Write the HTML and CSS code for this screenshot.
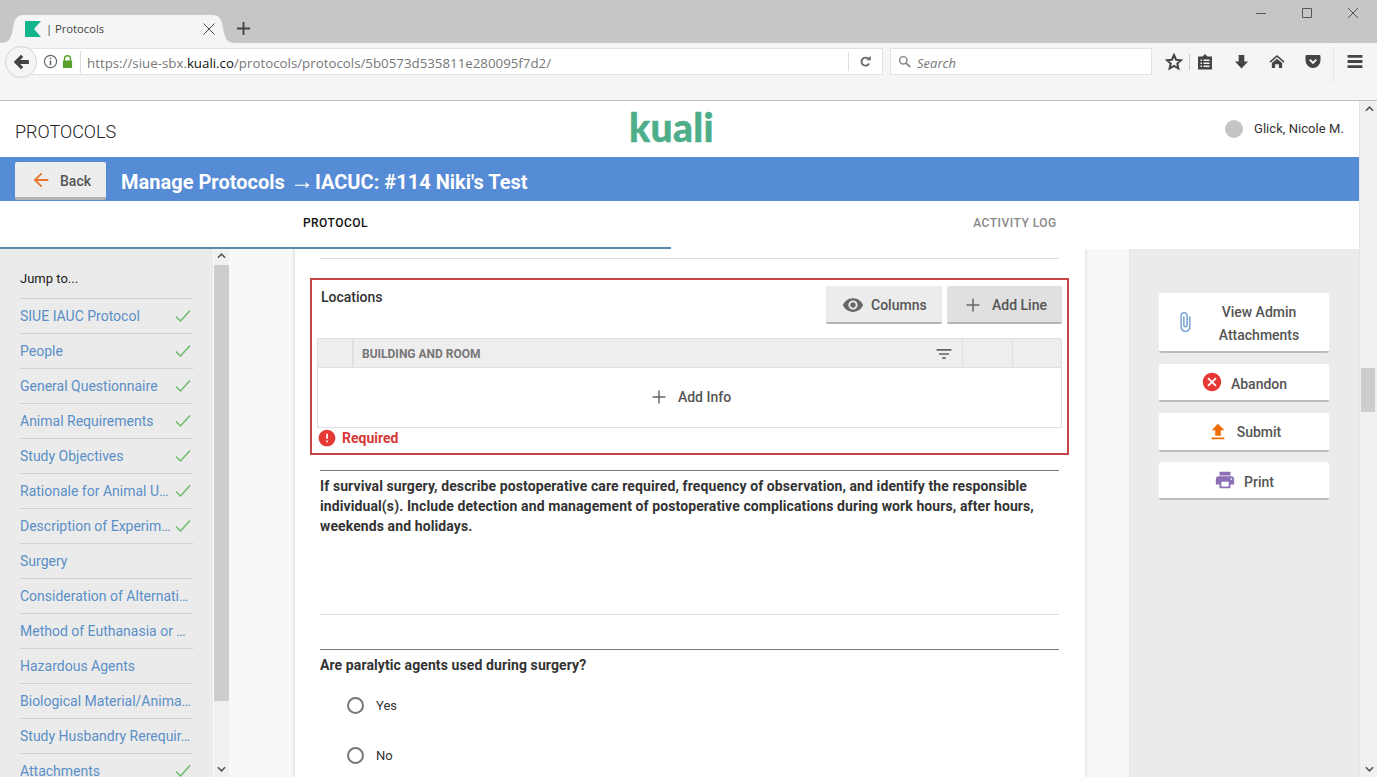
FILE: index.html
```html
<!DOCTYPE html>
<html lang="en">
<head>
<meta charset="utf-8">
<title>Protocols</title>
<link rel="stylesheet" href="styles.css">
</head>
<body>
<div class="chrome">
  <div class="tabstrip">
    <div class="tab">
      <svg class="favicon" viewBox="0 0 16 16"><path fill="#12b58c" d="M0 0h16L9 8l7 8H0z"/></svg>
      <span class="tab-title">| Protocols</span>
      <svg class="tab-close" viewBox="0 0 12 12"><path d="M.5.5l11 11M11.5.5l-11 11" fill="none" stroke="#444" stroke-width="1"/></svg>
    </div>
    <svg class="newtab" viewBox="0 0 14 14"><path d="M6 0h2v6h6v2H8v6H6V8H0V6h6z" fill="#444"/></svg>
    <div class="winctrls">
      <svg viewBox="0 0 12 12"><path d="M1 6.500h10" stroke="#555" fill="none"/></svg>
      <svg viewBox="0 0 12 12"><path d="M1.500 1.500h9v9h-9z" stroke="#555" fill="none"/></svg>
      <svg viewBox="0 0 12 12"><path d="M1 1l10 10M11 1L1 11" stroke="#555" fill="none"/></svg>
    </div>
  </div>
  <div class="toolbar">
    <div class="backcircle"><svg viewBox="0 0 16 16"><path fill="#444" d="M8 1.500l2 2L7.200 6.200H15v3.600H7.200L10 12.500l-2 2L1.500 8z"/></svg></div>
    <div class="urlbar">
      <svg class="ub-info" viewBox="0 0 16 16"><circle cx="8" cy="8" r="6.500" fill="none" stroke="#666" stroke-width="1.300"/><path d="M7.200 7h1.600v5H7.200zM7.200 4h1.600v1.600H7.200z" fill="#666"/></svg>
      <svg class="ub-lock" viewBox="0 0 12 14"><path fill="#5aa02c" d="M1 6h1V4a4 4 0 018 0v2h1v8H1zm2.500 0h5V4a2.500 2.500 0 00-5 0z"/></svg>
      <span class="url">https://siue-sbx.<b>kuali.co</b>/protocols/protocols/5b0573d535811e280095f7d2/</span>
      <span class="ub-reload"><svg viewBox="0 0 16 16"><path fill="none" stroke="#666" stroke-width="2.200" d="M12.500 10.500A5 5 0 1 1 11.500 4.500"/><path fill="#666" d="M9 6.500h5.500V1z"/></svg></span>
    </div>
    <div class="searchbar">
      <svg viewBox="0 0 16 16"><circle cx="6.500" cy="6.500" r="4.500" fill="none" stroke="#888" stroke-width="1.800"/><path d="M10 10l5 5" stroke="#888" stroke-width="2.200"/></svg>
      <span>Search</span>
    </div>
    <div class="tools">
      <svg class="t-star" viewBox="0 0 18 18"><path fill="none" stroke="#444" stroke-width="2" d="M9 2l2.100 4.700 5 .5-3.800 3.300 1.100 5L9 13l-4.400 2.500 1.100-5L1.900 7.200l5-.5z"/></svg>
      <i class="t-sep"></i>
      <svg class="t-clip" viewBox="0 0 16 16"><path fill="#444" d="M5.500 2.500L8 0l2.500 2.500H15v13H1v-13zM3.500 5.500v1.500h1.500V5.500zm3 0v1.500h6V5.500zM3.500 8.500V10h1.500V8.500zm3 0V10h6V8.500zm-3 3V13h1.500v-1.500zm3 0V13h6v-1.500z" fill-rule="evenodd"/></svg>
      <svg class="t-down" viewBox="0 0 16 16"><path fill="#444" d="M5 1h6v7h4l-7 7.500L1 8h4z"/></svg>
      <svg class="t-home" viewBox="0 0 16 16"><path fill="#444" d="M8 1l8 7-1 1.200L8 3.300 1 9.200 0 8zM8 5l5.500 4.600V15H10v-4H6v4H2.500V9.600z"/></svg>
      <svg class="t-pocket" viewBox="0 0 16 16"><path fill="#444" d="M1.500 1h13A1.500 1.500 0 0116 2.500V7A8 8 0 010 7V2.500A1.500 1.500 0 011.500 1z"/><path fill="none" stroke="#f5f5f5" stroke-width="2.200" d="M4.500 6L8 9.500 11.500 6"/></svg>
      <i class="t-sep2"></i>
      <svg class="t-menu" viewBox="0 0 16 14"><path fill="#444" d="M0 0h16v3H0zM0 5.500h16v3H0zM0 11h16v3H0z"/></svg>
    </div>
  </div>
</div>

<div class="viewport">
  <div class="page">
    <header class="apphead">
      <div class="brand">PROTOCOLS</div>
      <div class="logo">kuali</div>
      <div class="user"><span class="avatar"></span><span>Glick, Nicole M.</span></div>
    </header>
    <div class="banner">
      <button class="backbtn"><svg viewBox="0 0 24 24"><path fill="#e8762c" d="M20 11H7.830l5.590-5.590L12 4l-8 8 8 8 1.410-1.410L7.830 13H20v-2z"/></svg>Back</button>
      <h1>Manage Protocols <span class="arw">→</span> IACUC: #114 Niki's Test</h1>
    </div>
    <nav class="tabs">
      <div class="tabitem active">PROTOCOL</div>
      <div class="tabitem">ACTIVITY LOG</div>
    </nav>
    <div class="body">
      <aside class="sidebar">
        <div class="jump">Jump to...</div>
        <div class="navitem"><span>SIUE IAUC Protocol</span><svg viewBox="0 0 16 14"><path d="M1 7.500L5.500 12 15 1.500"/></svg></div>
        <div class="navitem"><span>People</span><svg viewBox="0 0 16 14"><path d="M1 7.500L5.500 12 15 1.500"/></svg></div>
        <div class="navitem"><span>General Questionnaire</span><svg viewBox="0 0 16 14"><path d="M1 7.500L5.500 12 15 1.500"/></svg></div>
        <div class="navitem"><span>Animal Requirements</span><svg viewBox="0 0 16 14"><path d="M1 7.500L5.500 12 15 1.500"/></svg></div>
        <div class="navitem"><span>Study Objectives</span><svg viewBox="0 0 16 14"><path d="M1 7.500L5.500 12 15 1.500"/></svg></div>
        <div class="navitem"><span>Rationale for Animal U…</span><svg viewBox="0 0 16 14"><path d="M1 7.500L5.500 12 15 1.500"/></svg></div>
        <div class="navitem"><span>Description of Experim…</span><svg viewBox="0 0 16 14"><path d="M1 7.500L5.500 12 15 1.500"/></svg></div>
        <div class="navitem"><span>Surgery</span></div>
        <div class="navitem"><span>Consideration of Alternati…</span></div>
        <div class="navitem"><span>Method of Euthanasia or …</span></div>
        <div class="navitem"><span>Hazardous Agents</span></div>
        <div class="navitem"><span>Biological Material/Anima…</span></div>
        <div class="navitem"><span>Study Husbandry Rerequir…</span></div>
        <div class="navitem"><span>Attachments</span><svg viewBox="0 0 16 14"><path d="M1 7.500L5.500 12 15 1.500"/></svg></div>
      </aside>
      <div class="sb sb-side">
        <svg class="arrow" viewBox="0 0 10 6"><path d="M1 5l4-4 4 4"/></svg>
        <div class="sb-track"><div class="sb-thumb"></div></div>
        <svg class="arrow" viewBox="0 0 10 6"><path d="M1 1l4 4 4-4"/></svg>
      </div>
      <main class="main">
        <div class="card">
          <hr class="rule light first">
          <section class="locations">
            <div class="loc-head">
              <div class="loc-title">Locations</div>
              <div class="loc-actions">
                <button class="gbtn btn-col"><svg viewBox="0 0 24 24"><path fill="#666" d="M12 4.500C7 4.500 2.730 7.610 1 12c1.730 4.390 6 7.500 11 7.500s9.270-3.110 11-7.500c-1.730-4.390-6-7.500-11-7.500zM12 17c-2.760 0-5-2.240-5-5s2.240-5 5-5 5 2.240 5 5-2.240 5-5 5zm0-8c-1.660 0-3 1.340-3 3s1.340 3 3 3 3-1.340 3-3-1.340-3-3-3z"/></svg>Columns</button>
                <button class="gbtn btn-add"><svg viewBox="0 0 24 24"><path fill="#666" d="M19 12.800h-6.200V19h-1.600v-6.200H5v-1.600h6.200V5h1.600v6.200H19z"/></svg>Add Line</button>
              </div>
            </div>
            <div class="table">
              <div class="thead">
                <div class="th"></div>
                <div class="th th-main"><span>BUILDING AND ROOM</span><svg viewBox="0 0 24 24"><path fill="#666" d="M10 18h4v-2h-4v2zM3 6v2h18V6H3zm3 7h12v-2H6v2z"/></svg></div>
                <div class="th"></div>
                <div class="th"></div>
              </div>
              <div class="tbody"><svg viewBox="0 0 24 24"><path fill="#666" d="M19 12.800h-6.200V19h-1.600v-6.200H5v-1.600h6.200V5h1.600v6.200H19z"/></svg>Add Info</div>
            </div>
            <div class="required"><svg viewBox="0 0 24 24"><path fill="#e53935" d="M12 2C6.480 2 2 6.480 2 12s4.480 10 10 10 10-4.480 10-10S17.520 2 12 2zm1 15h-2v-2h2v2zm0-4h-2V7h2v6z"/></svg>Required</div>
          </section>
          <hr class="rule dark r2">
          <p class="question q1">If survival surgery, describe postoperative care required, frequency of observation, and identify the responsible individual(s). Include detection and management of postoperative complications during work hours, after hours, weekends and holidays.</p>
          <hr class="rule light r3">
          <hr class="rule dark r4">
          <p class="question q2">Are paralytic agents used during surgery?</p>
          <label class="radio r-yes"><span class="dot"></span>Yes</label>
          <label class="radio r-no"><span class="dot"></span>No</label>
        </div>
      </main>
      <aside class="rail">
        <button class="rbtn rb-view"><svg class="ic-clip" viewBox="0 0 24 24"><path fill="#6a9bd0" d="M16.500 6v11.500c0 2.210-1.790 4-4 4s-4-1.790-4-4V5c0-1.380 1.120-2.500 2.500-2.500s2.500 1.120 2.500 2.500v10.500c0 .55-.45 1-1 1s-1-.45-1-1V6H10v9.500c0 1.380 1.120 2.500 2.500 2.500s2.500-1.120 2.500-2.500V5c0-2.210-1.790-4-4-4S7 2.790 7 5v12.500c0 3.040 2.460 5.500 5.500 5.500s5.500-2.460 5.500-5.500V6h-1.500z"/></svg><span>View Admin Attachments</span></button>
        <button class="rbtn rb-ab"><svg viewBox="0 0 24 24"><path fill="#e53935" d="M12 2C6.470 2 2 6.470 2 12s4.470 10 10 10 10-4.470 10-10S17.530 2 12 2zm5 13.590L15.590 17 12 13.410 8.410 17 7 15.590 10.590 12 7 8.410 8.410 7 12 10.590 15.590 7 17 8.410 13.410 12 17 15.590z"/></svg>Abandon</button>
        <button class="rbtn rb-sub"><svg viewBox="0 0 24 24"><path fill="#ef6c00" d="M9 16h6v-6h4l-7-7-7 7h4zm-4 2h14v2H5z"/></svg>Submit</button>
        <button class="rbtn rb-pr"><svg viewBox="0 0 24 24"><path fill="#8c6fb5" d="M19 8H5c-1.660 0-3 1.340-3 3v6h4v4h12v-4h4v-6c0-1.660-1.340-3-3-3zm-3 11H8v-5h8v5zm3-7c-.55 0-1-.45-1-1s.45-1 1-1 1 .45 1 1-.45 1-1 1zm-1-9H6v4h12V3z"/></svg>Print</button>
      </aside>
    </div>
  </div>
  <div class="sb sb-page">
    <svg class="arrow" viewBox="0 0 10 6"><path d="M1 5l4-4 4 4"/></svg>
    <div class="sb-track"><div class="sb-thumb"></div></div>
    <svg class="arrow" viewBox="0 0 10 6"><path d="M1 1l4 4 4-4"/></svg>
  </div>
</div>
</body>
</html>
```
FILE: styles.css
```css
* { box-sizing: border-box; }
html, body { margin: 0; height: 777px; overflow: hidden; }
body { display: flex; flex-direction: column; font-family: Roboto, sans-serif; color: #333; background: #fff; }
button { font-family: inherit; cursor: pointer; border: 0; padding: 0; }

/* browser chrome */
.chrome { flex: none; font-family: "Open Sans", sans-serif; }
.tabstrip { height: 43px; background: #c6c6c6; display: flex; align-items: flex-end; position: relative; }
.tab { width: 236px; height: 28px; background: #f5f5f5; display: flex; align-items: center; padding: 0 0 0 25px;
  clip-path: path("M0 28C9 28 11 24 13 13C14 4 17 0 24 0L212 0C219 0 222 4 223 13C225 24 227 28 236 28Z"); }
.favicon { width: 16px; height: 16px; flex: none; margin-right: 5px; }
.tab-title { font-size: 11.200px; color: #444; width: 157px; white-space: nowrap; padding-bottom: 1px; }
.tab-close { width: 12px; height: 12px; }
.newtab { width: 13px; height: 13px; margin: 0 0 8px 1px; }
.winctrls { margin-left: auto; align-self: flex-start; display: flex; gap: 34px; padding: 7px 18px 0 0; }
.winctrls svg { width: 12px; height: 12px; }
.toolbar { height: 58px; background: #f5f5f5; border-bottom: 1px solid #bdbdbd; display: flex; align-items: flex-start; padding: 5px 0 0 27px; position: relative; }
.backcircle { position: absolute; left: 5px; top: 3px; width: 32px; height: 32px; border-radius: 50%; background: #f5f5f5; border: 1px solid #d4d4d4; display: flex; align-items: center; justify-content: center; }
.backcircle svg { width: 18px; height: 18px; }
.urlbar { width: 856px; height: 27px; background: #fff; border: 1px solid #e2e2e2; border-left: 0; display: flex; align-items: center; padding-left: 16px; }
.ub-info { width: 15px; height: 15px; flex: none; }
.ub-lock { width: 11px; height: 13px; flex: none; margin-left: 4px; }
.url { font-size: 13.300px; color: #777; margin-left: 7px; border-left: 1px solid #ddd; padding: 2px 0 0 6px; line-height: 20px; width: 768px; white-space: nowrap; flex: none; }
.url b { font-weight: 400; color: #111; }
.ub-reload { flex: 1; height: 19px; border-left: 1px solid #ddd; display: flex; align-items: center; justify-content: center; }
.ub-reload svg { width: 13px; height: 13px; }
.searchbar { width: 262px; height: 27px; margin-left: 7px; background: #fff; border: 1px solid #e2e2e2; display: flex; align-items: center; padding-left: 7px; }
.searchbar svg { width: 13px; height: 13px; margin-right: 6px; }
.searchbar span { font-size: 13px; font-style: italic; color: #777; padding-top: 2px; }
.tools { display: flex; align-items: center; height: 27px; padding-left: 13px; }
.tools svg { flex: none; }
.t-star { width: 18px; height: 18px; }
.t-sep { width: 1px; height: 16px; background: #ccc; margin: 0 7px 0 6px; }
.t-clip { width: 16px; height: 16px; }
.t-down { width: 15px; height: 15px; margin-left: 21px; }
.t-home { width: 16px; height: 15px; margin-left: 20px; }
.t-pocket { width: 16px; height: 15px; margin-left: 20px; }
.t-sep2 { width: 1px; height: 36px; background: #e6e6e6; margin: 6px 13px 0 12px; }
.t-menu { width: 16px; height: 13px; }

/* page */
.viewport { flex: 1; display: flex; min-height: 0; }
.page { width: 1359px; display: flex; flex-direction: column; min-height: 0; }
.apphead { height: 56px; flex: none; display: flex; align-items: center; padding: 0 15px; position: relative; }
.brand { font-size: 18px; font-weight: 300; color: #222; margin-top: 5px; width: 614px; }
.logo { font-family: Lato, sans-serif; font-weight: 900; font-size: 39px; line-height: 40px; letter-spacing: .3px; color: #4fae8a; margin-top: -5px; width: 596px; -webkit-text-stroke: .4px #4fae8a; }
.user { display: flex; align-items: center; font-size: 13px; letter-spacing: .05px; color: #333; white-space: nowrap; margin-top: -1px; }
.avatar { width: 18px; height: 18px; border-radius: 50%; background: #c4c4c4; margin-right: 11px; }
.banner { height: 44px; flex: none; background: #568bd6; display: flex; align-items: flex-end; padding-left: 15px; }
.backbtn { width: 91px; height: 38px; margin-bottom: 1px; background: #ededed; border-bottom: 3px solid #b5b5b5; border-radius: 2px; display: flex; align-items: center; font-size: 14px; font-weight: 500; color: #555; padding: 2px 0 0 15px; }
.backbtn svg { width: 22px; height: 22px; margin: -2px 8px 0 0; flex: none; }
.banner h1 { margin: 0 0 6px 15px; font-size: 20px; line-height: 26px; font-weight: 700; color: #fff; letter-spacing: .02px; }
.arw { font-family: "Liberation Sans", sans-serif; font-weight: 400; font-size: 24px; line-height: 20px; letter-spacing: -4px; }
.tabs { height: 48px; flex: none; display: flex; }
.tabitem { width: 688px; display: flex; align-items: center; justify-content: center; font-size: 12px; letter-spacing: .5px; font-weight: 500; color: #888; padding-bottom: 4px; }
.tabitem.active { width: 671px; color: #111; border-bottom: 2px solid #5b8cac; padding-bottom: 2px; }
.body { flex: 1; display: flex; min-height: 0; }
.sidebar { width: 214px; flex: none; background: #ebebeb; padding: 0 20px; border-right: 1px solid #f8f8f8; overflow: hidden; }
.jump { height: 50px; display: flex; align-items: center; padding-top: 9px; font-size: 13px; color: #222; border-bottom: 1px solid #cfcfcf; }
.navitem { height: 35px; flex: none; display: flex; align-items: center; border-bottom: 1px solid #cfcfcf; font-size: 14px; color: #5a8fc8; }
.navitem span { flex: 1; min-width: 0; white-space: nowrap; }
.navitem svg { width: 16px; height: 14px; flex: none; margin: 0 2px 0 1px; fill: none; stroke: #6dbb68; stroke-width: 1.500; }
.sb { flex: none; display: flex; flex-direction: column; background: #f0f0f0; align-items: stretch; }
.sb .arrow { width: 9px; height: 6px; margin: 5px auto; flex: none; fill: none; stroke: #555; stroke-width: 1.800; }
.sb-track { flex: 1; position: relative; }
.sb-side { width: 15px; }
.sb-side .sb-track .sb-thumb { height: 436px; background: #cdcdcd; }
.sb-page { width: 18px; padding-left: 1px; border-left: 1px solid #e4e4e4; }
.sb-page .sb-track { padding: 251px 2px 0 0; }
.sb-page .sb-thumb { height: 44px; background: #cdcdcd; }
.sb-side .arrow:first-child { margin: 4px auto 6px; }
.main { width: 900px; flex: none; background: #f8f8f8; padding: 0 44px 0 66px; overflow: hidden; }
.card { background: #fff; height: 100%; width: 790px; padding: 9px 26px 0 25px; box-shadow: -2px 0 2px rgba(0,0,0,.08), 2px 0 2px rgba(0,0,0,.06); }
.rule { border: 0; height: 1px; margin: 0; }
.rule.light { background: #dcdcdc; }
.rule.dark { background: #777; }
.locations { margin: 19px -10px 0 -10px; height: 177px; border: 2px solid #c94444; padding: 0 5px; }
.loc-head { display: flex; justify-content: space-between; height: 58px; }
.loc-title { font-size: 14px; font-weight: 500; color: #333; padding: 9px 0 0 4px; line-height: 16px; }
.loc-actions { display: flex; gap: 5px; padding-top: 6px; }
.gbtn { height: 38px; border-bottom: 2px solid #b5b5b5; border-radius: 2px; display: flex; align-items: center; font-size: 14px; font-weight: 500; color: #555; background: #ececec; padding-top: 1px; }
.gbtn svg { width: 22px; height: 22px; flex: none; }
.btn-col { width: 116px; padding-left: 16px; }
.btn-col svg { margin-right: 7px; }
.btn-add { width: 115px; padding-left: 15px; background: #e0e0e0; }
.btn-add svg { margin-right: 8px; }
.table { border: 1px solid #e0e0e0; }
.thead { display: grid; grid-template-columns: 36px 1fr 50px 48px; height: 29px; background: #eeeeee; border-bottom: 1px solid #e0e0e0; }
.th { border-right: 1px solid #e0e0e0; display: flex; align-items: center; }
.th:first-child { border-right-width: 2px; }
.th:last-child { border-right: 0; }
.th-main { justify-content: space-between; padding: 1px 8px 0 8px; font-size: 12px; font-weight: 700; color: #777; }
.th-main svg { width: 20px; height: 20px; }
.tbody { height: 59px; display: flex; align-items: center; justify-content: center; font-size: 14px; font-weight: 500; color: #555; padding-bottom: 2px; }
.tbody svg { width: 22px; height: 22px; margin-right: 8px; }
.required { display: flex; align-items: center; font-size: 14px; font-weight: 700; color: #d83a3a; height: 20px; }
.required svg { width: 20px; height: 20px; margin-right: 5px; flex: none; }
.r2 { margin-top: 15px; }
.question { margin: 0; font-size: 14px; font-weight: 700; letter-spacing: .1px; line-height: 20px; color: #333; }
.q1 { padding-top: 5px; height: 143px; }
.r4 { margin-top: 34px; }
.q2 { padding-top: 5px; }
.radio { display: flex; align-items: center; font-size: 13px; color: #333; margin-left: 27px; height: 50px; }
.r-yes { margin-top: 5px; }
.dot { width: 17px; height: 17px; border-radius: 50%; border: 2px solid #777; margin-right: 12px; flex: none; }
.rail { width: 230px; flex: none; background: #ebebeb; border-left: 1px solid #e4e4e4; padding: 44px 0 0 29px; display: flex; flex-direction: column; align-items: flex-start; }
.rbtn { width: 170px; background: #fff; border-bottom: 2px solid #bbb; border-radius: 2px; display: flex; align-items: center; justify-content: center; font-size: 14px; font-weight: 500; color: #555; }
.rbtn svg { width: 22px; height: 22px; flex: none; margin-right: 8px; }
.rb-view { height: 60px; margin-bottom: 11px; line-height: 23px; justify-content: flex-start; padding: 4px 0 0 15px; }
.rb-view svg.ic-clip { margin: -4px 8px 0 0; }
.rb-view span { width: 110px; text-align: center; }
.rb-ab { height: 38px; margin-bottom: 11px; padding-top: 3px; }
.rb-ab svg { margin-top: -3px; }
.rb-sub { height: 39px; margin-bottom: 10px; padding-top: 1px; }
.rb-pr { height: 38px; padding-top: 3px; }
.rb-pr svg { margin-top: -3px; }
```
